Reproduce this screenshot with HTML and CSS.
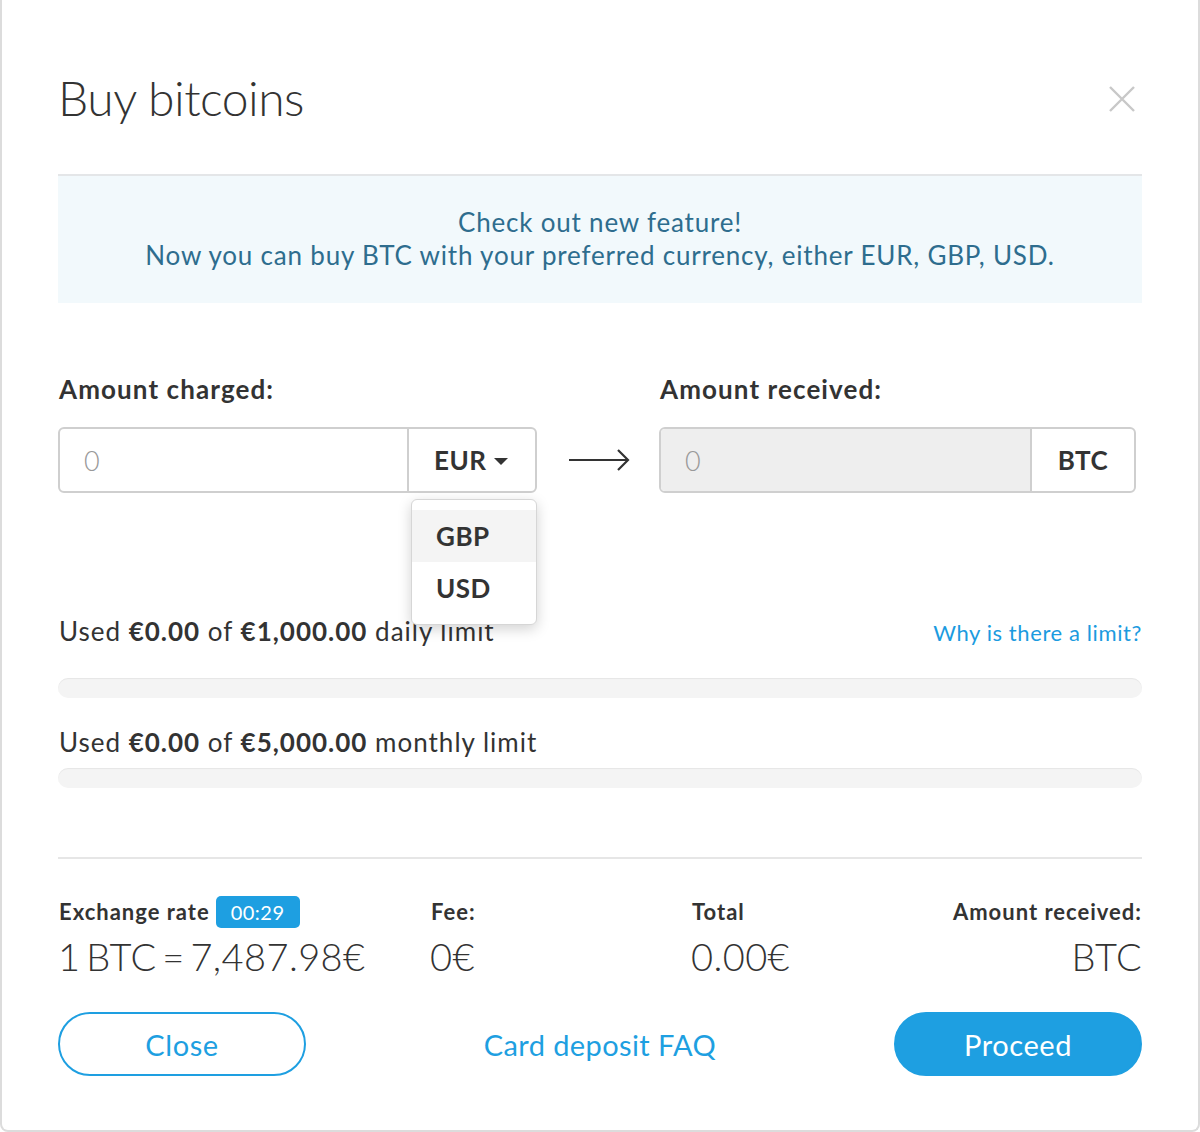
FILE: index.html
```html
<!DOCTYPE html>
<html lang="en">
<head>
<meta charset="utf-8">
<title>Buy bitcoins</title>
<link rel="stylesheet" href="styles.css">
</head>
<body>
<div class="modal">
  <header class="modal-header">
    <h1 class="title">Buy bitcoins</h1>
    <button class="close-x" aria-label="Close">
      <svg width="26" height="26" viewBox="0 0 26 26"><path d="M1 1 L25 25 M25 1 L1 25" stroke="#c8c8c8" stroke-width="2.4" fill="none"/></svg>
    </button>
  </header>

  <div class="banner">
    <p>Check out new feature!</p>
    <p>Now you can buy BTC with your preferred currency, either EUR, GBP, USD.</p>
  </div>

  <div class="amounts">
    <div class="label">Amount charged:</div>
    <div></div>
    <div class="label">Amount received:</div>

    <div class="field">
      <div class="field-input">0</div>
      <div class="field-select">EUR <span class="caret"></span></div>
      <ul class="dropdown">
        <li class="active">GBP</li>
        <li>USD</li>
      </ul>
    </div>
    <div class="arrow">
      <svg width="62" height="24" viewBox="0 0 62 24"><path d="M0 12 H59 M49 2 L59 12 L49 22" stroke="#333" stroke-width="2.2" fill="none"/></svg>
    </div>
    <div class="field field-disabled">
      <div class="field-input">0</div>
      <div class="field-unit">BTC</div>
    </div>
  </div>

  <div class="limit limit-daily">
    <div class="limit-text">
      <span>Used <b>€0.00</b> of <b>€1,000.00</b> daily limit</span>
      <a class="link" href="#">Why is there a limit?</a>
    </div>
    <div class="bar"></div>
  </div>

  <div class="limit limit-monthly">
    <div class="limit-text">
      <span>Used <b>€0.00</b> of <b>€5,000.00</b> monthly limit</span>
    </div>
    <div class="bar bar-tight"></div>
  </div>

  <div class="summary">
    <div class="col">
      <div class="s-label">Exchange rate <span class="badge">00:29</span></div>
      <div class="s-value">1 BTC = 7,487.98€</div>
    </div>
    <div class="col">
      <div class="s-label">Fee:</div>
      <div class="s-value">0€</div>
    </div>
    <div class="col">
      <div class="s-label">Total</div>
      <div class="s-value">0.00€</div>
    </div>
    <div class="col col-right">
      <div class="s-label">Amount received:</div>
      <div class="s-value">BTC</div>
    </div>
  </div>

  <div class="actions">
    <button class="btn btn-outline">Close</button>
    <a class="faq" href="#">Card deposit FAQ</a>
    <button class="btn btn-primary">Proceed</button>
  </div>
</div>
</body>
</html>
```
FILE: styles.css
```css
* { box-sizing: border-box; }
html, body { margin: 0; padding: 0; background: #fff; }
body {
  font-family: "Lato", "Open Sans", sans-serif;
  color: #333;
}
.modal {
  width: 1200px;
  height: 1132px;
  border: 2px solid #dcdcdc;
  border-top-width: 0;
  border-radius: 0 0 8px 8px;
  padding: 0 56px;
  background: #fff;
}
.modal-header {
  height: 176px;
  border-bottom: 2px solid #e4e6e8;
  display: flex;
  align-items: center;
  justify-content: space-between;
  padding-top: 20px;
}
.title {
  margin: 0;
  font-weight: 300;
  font-size: 48px;
  color: #333;
  letter-spacing: -0.5px;
}
.close-x {
  border: 0;
  background: none;
  padding: 0;
  margin-right: 7px;
  margin-top: 4px;
  display: flex;
}
.banner {
  background: #f2f9fc;
  padding: 30px 0 31px;
  text-align: center;
  color: #2e6d8e;
  font-size: 26px;
  letter-spacing: 0.8px;
  line-height: 33px;
}
.banner p { margin: 0; }

.amounts {
  margin-top: 71px;
  display: grid;
  grid-template-columns: 479px 122px 477px;
  row-gap: 23px;
}
.label {
  font-weight: 700;
  font-size: 26px;
  letter-spacing: 1.1px;
  line-height: 30px;
  padding-left: 1px;
}
.field {
  position: relative;
  display: flex;
  height: 66px;
  border: 2px solid #cfcfcf;
  border-radius: 6px;
}
.field-input {
  flex: 1;
  display: flex;
  align-items: center;
  padding-left: 24px;
  font-size: 27px;
  font-weight: 300;
  color: #999;
}
.field-select {
  width: 128px;
  border-left: 2px solid #cfcfcf;
  display: flex;
  align-items: center;
  padding-left: 25px;
  font-weight: 700;
  font-size: 26px;
  letter-spacing: 0.5px;
  color: #333;
  gap: 8px;
}
.caret {
  width: 0;
  height: 0;
  border-left: 7px solid transparent;
  border-right: 7px solid transparent;
  border-top: 7px solid #333;
  margin-top: 3px;
}
.field-disabled .field-input {
  background: #eeeeee;
  border-radius: 4px 0 0 4px;
}
.field-unit {
  width: 104px;
  border-left: 2px solid #cfcfcf;
  display: flex;
  align-items: center;
  justify-content: center;
  font-weight: 700;
  font-size: 26px;
  letter-spacing: 0.5px;
  color: #333;
}
.arrow {
  display: flex;
  align-items: center;
  justify-content: center;
  padding-left: 4px;
}
.dropdown {
  position: absolute;
  top: 70px;
  right: -2px;
  width: 126px;
  margin: 0;
  padding: 10px 0 10px;
  list-style: none;
  background: #fff;
  border: 1px solid #d6d6d6;
  border-radius: 6px;
  box-shadow: 0 4px 14px rgba(0, 0, 0, 0.18);
  z-index: 5;
}
.dropdown li {
  height: 52px;
  display: flex;
  align-items: center;
  padding-left: 24px;
  font-weight: 700;
  font-size: 26px;
  letter-spacing: 0.5px;
  color: #333;
}
.dropdown li.active { background: #f4f4f4; }

.limit-daily { margin-top: 123px; }
.limit-monthly { margin-top: 29px; }
.limit-text {
  display: flex;
  justify-content: space-between;
  align-items: baseline;
  font-size: 26px;
  letter-spacing: 1px;
  line-height: 30px;
  padding-left: 1px;
}
.limit-text b { font-weight: 700; }
.link {
  color: #1b9be0;
  text-decoration: none;
  font-size: 22px;
  letter-spacing: 0.6px;
}
.bar {
  margin-top: 30px;
  height: 20px;
  border-radius: 10px;
  background: #f4f4f4;
  box-shadow: inset 0 1px 1px rgba(0, 0, 0, 0.06);
}
.bar-tight { margin-top: 11px; }

.summary {
  margin-top: 69px;
  border-top: 2px solid #e6e6e6;
  padding-top: 37px;
  display: grid;
  grid-template-columns: 372px 261px 1fr 1fr;
}
.col-right { text-align: right; }
.s-label {
  font-weight: 700;
  font-size: 22px;
  letter-spacing: 1px;
  line-height: 32px;
  display: flex;
  align-items: center;
  gap: 6px;
  padding-left: 1px;
}
.col-right .s-label { justify-content: flex-end; }
.badge {
  display: inline-flex;
  align-items: center;
  height: 32px;
  padding: 0 15px;
  border-radius: 5px;
  background: #1e9fe1;
  color: #fff;
  font-weight: 400;
  font-size: 20px;
  letter-spacing: 0.5px;
}
.s-value {
  font-weight: 300;
  font-size: 38px;
  letter-spacing: 0.4px;
  word-spacing: -5px;
  line-height: 46px;
  margin-top: 5px;
}
.actions {
  margin-top: 33px;
  display: flex;
  align-items: center;
  justify-content: space-between;
}
.btn {
  width: 248px;
  height: 64px;
  border-radius: 32px;
  font-family: inherit;
  font-size: 29px;
  font-weight: 400;
  letter-spacing: 0.6px;
  cursor: pointer;
}
.btn-outline {
  background: #fff;
  border: 2px solid #1e9fe1;
  color: #1e9fe1;
}
.btn-primary {
  background: #1e9fe1;
  border: 2px solid #1e9fe1;
  color: #fff;
}
.faq {
  color: #1e9fe1;
  text-decoration: none;
  font-size: 29px;
  letter-spacing: 0.4px;
}
```
